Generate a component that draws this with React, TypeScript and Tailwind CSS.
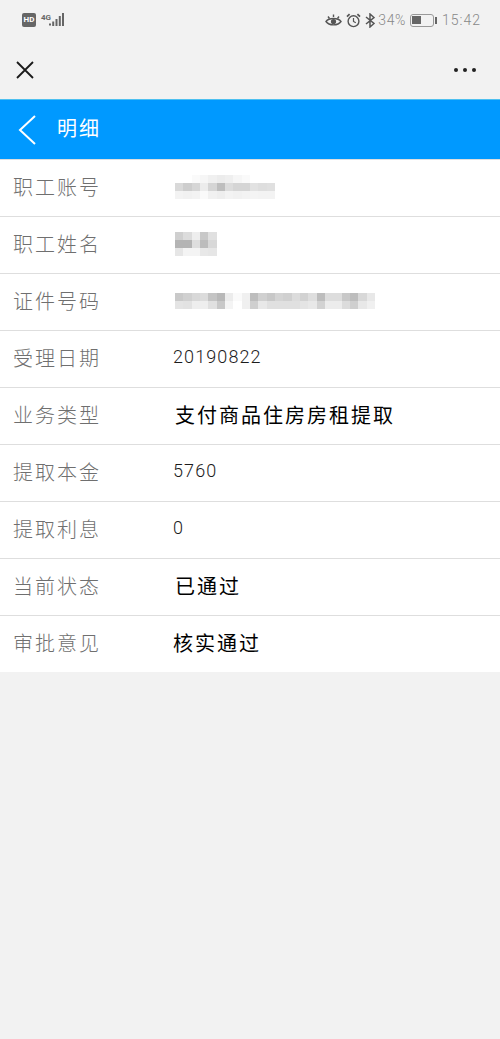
const cjk = "font-['Noto_Sans_CJK_SC','Noto_Sans',sans-serif]";

type Row = { label: string; value?: string; indent?: string; numeric?: boolean; mosaic?: string[][] };

// pixelated patches over the redacted values, one array per line of blocks
const accountMosaic = [
  ["#ffffff", "#ffffff", "#fafafa", "#f6f6f6", "#f0f0f0", "#ececec", "#efefef", "#f6f6f6", "#fafafa", "#ffffff", "#ffffff", "#ffffff"],
  ["#d9d9d9", "#cdcdcd", "#d6d6d6", "#ececec", "#d5d5d5", "#bebebe", "#dcdcdc", "#d5d5d5", "#d5d5d5", "#e2e2e2", "#dedede", "#e0e0e0"],
  ["#f3f3f3", "#f1f1f1", "#f3f3f3", "#fafafa", "#f1f1f1", "#eeeeee", "#f3f3f3", "#f1f1f1", "#f3f3f3", "#f4f4f4", "#f3f3f3", "#f3f3f3"],
];
const nameMosaic = [
  ["#cfcfcf", "#dcdcdc", "#eeeeee", "#c8c8c8", "#e0e0e0"],
  ["#b4b4b4", "#b4b4b4", "#dedede", "#bcbcbc", "#d8d8d8"],
  ["#e6e6e6", "#f4f4f4", "#f4f4f4", "#e8e8e8", "#e6e6e6"],
];
const idMosaic = [
  ["#c9c9c9", "#d0d0d0", "#d8d8d8", "#dcdcdc", "#c4c4c4", "#b8b8b8", "#ececec", "#fafafa", "#f0f0f0", "#bdbdbd", "#d0d0d0", "#c8c8c8", "#d4d4d4", "#d0d0d0", "#dcdcdc", "#d2d2d2", "#dedede", "#bdbdbd", "#dddddd", "#dddddd", "#c8c8c8", "#bdbdbd", "#d8d8d8", "#e8e8e8"],
  ["#e4e4e4", "#e2e2e2", "#eeeeee", "#eeeeee", "#e0e0e0", "#c8c8c8", "#f4f4f4", "#ffffff", "#f0f0f0", "#cfcfcf", "#e8e8e8", "#e0e0e0", "#e0e0e0", "#e0e0e0", "#e0e0e0", "#e4e4e4", "#e8e8e8", "#d2d2d2", "#ececec", "#ececec", "#dcdcdc", "#cfcfcf", "#e8e8e8", "#f0f0f0"],
];

const rows: Row[] = [
  { label: "职工账号", mosaic: accountMosaic },
  { label: "职工姓名", mosaic: nameMosaic },
  { label: "证件号码", mosaic: idMosaic },
  { label: "受理日期", value: "20190822", numeric: true },
  { label: "业务类型", value: "支付商品住房房租提取", indent: "pl-[2px]" },
  { label: "提取本金", value: "5760", numeric: true },
  { label: "提取利息", value: "0", numeric: true },
  { label: "当前状态", value: "已通过", indent: "pl-[2px]" },
  { label: "审批意见", value: "核实通过" },
];

function Mosaic({ lines }: { lines: string[][] }) {
  return (
    <div className="flex flex-col">
      {lines.map((line, i) => (
        <div key={i} className="flex">
          {line.map((color, j) => (
            <div key={j} className="w-[8.33px] h-[8.33px]" style={{ backgroundColor: color }} />
          ))}
        </div>
      ))}
    </div>
  );
}

function DetailRow({ row }: { row: Row }) {
  return (
    <div className="flex items-center h-[57px] last:h-[56px] border-b border-[#dedede] last:border-b-0 pl-[13px] pb-[2px]">
      <div className={`w-[160px] shrink-0 text-[20px] tracking-[2px] text-[#6f6f6f] font-light ${cjk}`}>
        {row.label}
      </div>
      {row.mosaic ? (
        <div className="pl-[2px]">
          <Mosaic lines={row.mosaic} />
        </div>
      ) : row.numeric ? (
        <div className="pb-[3px] text-[18px] tracking-[1.1px] text-[#1c1c1c] font-light font-['Roboto',sans-serif]">
          {row.value}
        </div>
      ) : (
        <div className={`text-[20px] tracking-[2px] text-black ${cjk} ${row.indent ?? ""}`}>{row.value}</div>
      )}
    </div>
  );
}

function SignalBars() {
  return (
    <svg width="16" height="14" viewBox="0 0 16 14" fill="#666">
      <rect x="0" y="10.5" width="2" height="2" />
      <rect x="3.2" y="8.5" width="2" height="4.5" />
      <rect x="6.5" y="6" width="2" height="7" />
      <rect x="9.8" y="3" width="2" height="10" />
      <rect x="13" y="0" width="2" height="13" />
    </svg>
  );
}

function EyeIcon() {
  return (
    <svg width="17" height="15" viewBox="0 0 17 15" fill="none" stroke="#555" strokeWidth="1.4">
      <path d="M1 8.5C4 4.5 13 4.5 16 8.5C13 13 4 13 1 8.5Z" />
      <circle cx="8.5" cy="8.6" r="2.6" fill="#555" stroke="none" />
      <path d="M3 3.5L4.5 5.5M8.5 1.5V4M14 3.5L12.5 5.5" />
    </svg>
  );
}

function AlarmIcon() {
  return (
    <svg width="15" height="15" viewBox="0 0 15 15" fill="none" stroke="#555" strokeWidth="1.4">
      <circle cx="7.5" cy="8.2" r="5.4" />
      <path d="M7.5 5V8.4L9.8 9.8" strokeWidth="1.2" />
      <path d="M1 3.6L3.6 1.2M14 3.6L11.4 1.2" strokeWidth="1.8" />
    </svg>
  );
}

function BluetoothIcon() {
  return (
    <svg width="10" height="15" viewBox="0 0 10 15" fill="none" stroke="#555" strokeWidth="1.5">
      <path d="M1 4L9 10.5L5 14V1L9 4.5L1 11" />
    </svg>
  );
}

function BatteryIcon() {
  return (
    <div className="flex items-center">
      <div className="w-[24px] h-[13px] rounded-[3px] border border-[#999] p-[1.5px]">
        <div className="w-[9px] h-full bg-[#666]" />
      </div>
      <div className="w-[2px] h-[7px] bg-[#666] ml-[1px]" />
    </div>
  );
}

export default function App() {
  return (
    <div className={`w-[500px] h-[1039px] bg-[#f2f2f2] flex flex-col ${cjk}`}>
      {/* phone status bar */}
      <div className="h-[40px] flex items-center justify-between pl-[22px] pr-[19px]">
        <div className="flex items-center gap-[5px]">
          <div className="w-[14px] h-[14px] rounded-[2px] bg-[#666] text-white text-[8px] font-bold leading-[14px] text-center font-['Roboto',sans-serif]">
            HD
          </div>
          <div className="flex items-start">
            <span className="w-[8px] text-[8px] leading-[10px] font-bold text-[#666] font-['Roboto',sans-serif]">4G</span>
            <SignalBars />
          </div>
        </div>
        <div className="flex items-center text-[#888] font-['Roboto',sans-serif] font-light">
          <EyeIcon />
          <div className="ml-[4px]"><AlarmIcon /></div>
          <div className="ml-[4px]"><BluetoothIcon /></div>
          <span className="ml-[3px] text-[14px] tracking-[0.6px]">34%</span>
          <div className="ml-[4px]"><BatteryIcon /></div>
          <span className="ml-[5px] text-[14px] tracking-[1px]">15:42</span>
        </div>
      </div>

      {/* webview title bar */}
      <div className="h-[59px] flex items-center justify-between pl-[16px] pr-[24px]">
        <svg width="18" height="18" viewBox="0 0 18 18" stroke="#1a1a1a" strokeWidth="1.8" fill="none">
          <path d="M1 1L17 17M17 1L1 17" />
        </svg>
        <div className="flex gap-[5px]">
          <div className="w-[4px] h-[4px] rounded-full bg-[#222]" />
          <div className="w-[4px] h-[4px] rounded-full bg-[#222]" />
          <div className="w-[4px] h-[4px] rounded-full bg-[#222]" />
        </div>
      </div>

      {/* blue page header */}
      <div className="h-[61px] bg-[#0099ff] border-t border-t-[#4dc0f0] border-b border-b-[#dedede] flex items-center pl-[18px]">
        <svg width="18" height="30" viewBox="0 0 18 30" stroke="#fff" strokeWidth="2" fill="none">
          <path d="M17 1L2 15L17 29" />
        </svg>
        <span className="ml-[21px] pb-[3px] text-[20px] tracking-[2px] text-white">明细</span>
      </div>

      <div className="bg-white">
        {rows.map((row) => (
          <DetailRow key={row.label} row={row} />
        ))}
      </div>
    </div>
  );
}
